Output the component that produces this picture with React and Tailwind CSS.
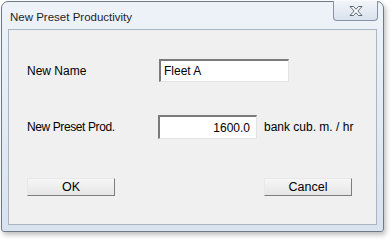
import React from 'react';

const font = { fontFamily: '"Liberation Sans", Arial, sans-serif' };

const CloseGlyph = () => (
    <svg width="16" height="12" viewBox="0 0 16 12">
        <path
            d="M2 1.5 H5.5 L8 4.3 L10.5 1.5 H14 L9.8 6 L14 10.5 H10.5 L8 7.7 L5.5 10.5 H2 L6.2 6 Z"
            fill="#ffffff"
            stroke="#5b6675"
            strokeWidth="1"
            strokeLinejoin="round"
        />
    </svg>
);

const App = () => {
    return (
        <div className="w-[392px] h-[240px] bg-white overflow-hidden" style={font}>
            <div className="ml-[1px] mt-[1px] w-[383px] h-[231px] rounded-t-[7px] rounded-b-[3px] border border-[#707a86] bg-gradient-to-b from-[#eef3f9] via-[#e3ebf4] to-[#d8e3ef] shadow-[2px_3px_5px_rgba(0,0,0,0.25)] flex flex-col">
                <div className="h-[27px] flex items-start justify-between shrink-0">
                    <span className="ml-[8px] mt-[8px] text-[11.5px] leading-[14px] text-[#1e1e1e]">
                        New Preset Productivity
                    </span>
                    <div className="mr-[5px] -mt-[1px] w-[45px] h-[20px] rounded-b-[4px] border border-[#8593a4] border-t-0 bg-gradient-to-b from-[#f2f5f9] to-[#d9e2ed] flex items-center justify-center">
                        <CloseGlyph />
                    </div>
                </div>

                <div className="mx-[6px] mb-[6px] flex-1 border border-[#a9b5c3] bg-[#f0f0f0] text-[12px] text-black">
                    <div className="pl-[18px] pt-[29px]">
                        <div className="flex items-center h-[23px]">
                            <span className="w-[132px]">New Name</span>
                            <div className="w-[130px] h-[23px] bg-white border-t-2 border-l-2 border-t-[#7a7a7a] border-l-[#7a7a7a] border-b border-r border-b-[#e3e3e3] border-r-[#e3e3e3] flex items-center pl-[3px]">
                                Fleet A
                            </div>
                        </div>

                        <div className="flex items-center h-[24px] mt-[33px]">
                            <span className="w-[131px] tracking-[-0.4px]">New Preset Prod.</span>
                            <div className="w-[99px] h-[24px] bg-white border-t-2 border-l-2 border-t-[#7a7a7a] border-l-[#7a7a7a] border-b border-r border-b-[#e3e3e3] border-r-[#e3e3e3] flex items-center justify-end pr-[6px]">
                                1600.0
                            </div>
                            <span className="ml-[7px]">bank cub. m. / hr</span>
                        </div>

                        <div className="flex mt-[39px]">
                            <button className="w-[88px] h-[18px] bg-gradient-to-b from-[#f6f6f6] to-[#e6e6e6] border border-t-[#e8e8e8] border-l-[#e8e8e8] border-b-[#7d7d7d] border-r-[#7d7d7d] text-[12.5px] leading-none">
                                OK
                            </button>
                            <button className="ml-[149px] w-[88px] h-[18px] bg-gradient-to-b from-[#f6f6f6] to-[#e6e6e6] border border-t-[#e8e8e8] border-l-[#e8e8e8] border-b-[#7d7d7d] border-r-[#7d7d7d] text-[12.5px] leading-none">
                                Cancel
                            </button>
                        </div>
                    </div>
                </div>
            </div>
        </div>
    );
};

export default App;
